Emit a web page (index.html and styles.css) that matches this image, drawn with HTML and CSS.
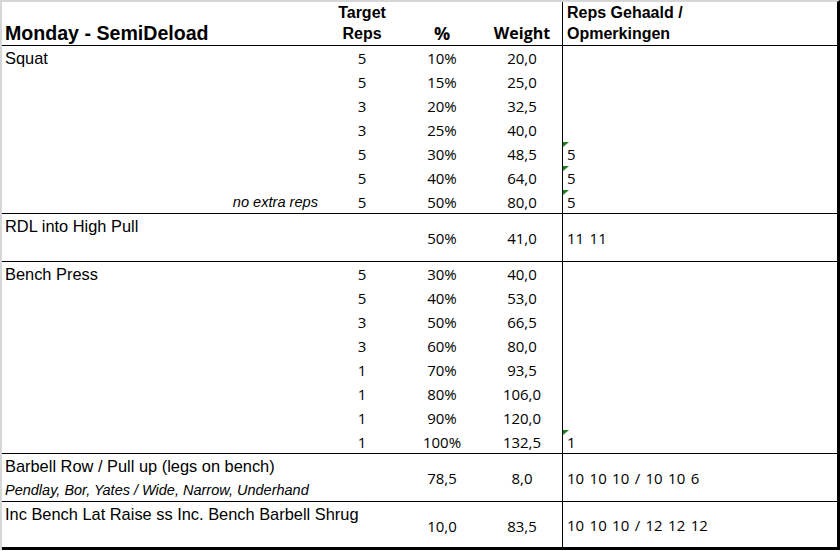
FILE: index.html
```html
<!DOCTYPE html>
<html>
<head>
<meta charset="utf-8">
<link rel="stylesheet" href="styles.css">
</head>
<body>
<div class="sheet">
  <div class="row head">
    <div class="main head-grid">
      <div class="title">Monday - SemiDeload</div>
      <div class="hd hd-b">Target<br>Reps</div>
      <div class="hd-n hd-c pct">%</div>
      <div class="hd-n hd-d">Weight</div>
    </div>
    <div class="notes head-notes">Reps Gehaald /<br>Opmerkingen</div>
  </div>

  <div class="row h7">
    <div class="main list">
      <div class="name">Squat</div><div class="num">5</div><div class="num">10%</div><div class="num">20,0</div>
      <div></div><div class="num">5</div><div class="num">15%</div><div class="num">25,0</div>
      <div></div><div class="num">3</div><div class="num">20%</div><div class="num">32,5</div>
      <div></div><div class="num">3</div><div class="num">25%</div><div class="num">40,0</div>
      <div></div><div class="num">5</div><div class="num">30%</div><div class="num">48,5</div>
      <div></div><div class="num">5</div><div class="num">40%</div><div class="num">64,0</div>
      <div class="note-l">no extra reps</div><div class="num">5</div><div class="num">50%</div><div class="num">80,0</div>
    </div>
    <div class="notes list">
      <div></div><div></div><div></div><div></div>
      <div class="ncell flag">5</div>
      <div class="ncell flag">5</div>
      <div class="ncell flag">5</div>
    </div>
  </div>

  <div class="row h2">
    <div class="main pair">
      <div class="name r1">RDL into High Pull</div>
      <div class="num span c3">50%</div>
      <div class="num span c4">41,0</div>
    </div>
    <div class="notes mid"><div class="ncell">11 11</div></div>
  </div>

  <div class="row h8">
    <div class="main list">
      <div class="name">Bench Press</div><div class="num">5</div><div class="num">30%</div><div class="num">40,0</div>
      <div></div><div class="num">5</div><div class="num">40%</div><div class="num">53,0</div>
      <div></div><div class="num">3</div><div class="num">50%</div><div class="num">66,5</div>
      <div></div><div class="num">3</div><div class="num">60%</div><div class="num">80,0</div>
      <div></div><div class="num">1</div><div class="num">70%</div><div class="num">93,5</div>
      <div></div><div class="num">1</div><div class="num">80%</div><div class="num">106,0</div>
      <div></div><div class="num">1</div><div class="num">90%</div><div class="num">120,0</div>
      <div></div><div class="num">1</div><div class="num">100%</div><div class="num">132,5</div>
    </div>
    <div class="notes list">
      <div></div><div></div><div></div><div></div><div></div><div></div><div></div>
      <div class="ncell flag">1</div>
    </div>
  </div>

  <div class="row h2">
    <div class="main pair">
      <div class="name r1">Barbell Row / Pull up (legs on bench)</div>
      <div class="sub r2">Pendlay, Bor, Yates / Wide, Narrow, Underhand</div>
      <div class="num span c3">78,5</div>
      <div class="num span c4">8,0</div>
    </div>
    <div class="notes mid"><div class="ncell">10 10 10 / 10 10 6</div></div>
  </div>

  <div class="row h2 last">
    <div class="main pair">
      <div class="name r1">Inc Bench Lat Raise ss Inc. Bench Barbell Shrug</div>
      <div class="num span c3">10,0</div>
      <div class="num span c4">83,5</div>
    </div>
    <div class="notes mid"><div class="ncell">10 10 10 / 12 12 12</div></div>
  </div>
</div>
</body>
</html>
```

FILE: styles.css
```css
html, body {
  margin: 0;
  background: #fff;
}

.sheet {
  width: 840px;
  box-sizing: border-box;
  border-top: 2px solid #d6d6d6;
  border-left: 2px solid #d6d6d6;
  border-right: 3px solid #000;
  font-family: "Liberation Sans", Arial, sans-serif;
  color: #000;
}

.row {
  display: flex;
  box-sizing: border-box;
  border-bottom: 1px solid #000;
}

.row.last {
  border-bottom: 3px solid #000;
}

.head { height: 44px; }
.h7 { height: 168px; }
.h8 { height: 192px; }
.h2 { height: 48px; }

.main {
  width: 560px;
  flex: none;
  display: grid;
  grid-template-columns: 320px 80px 80px 80px;
  grid-auto-rows: 24px;
}

.notes {
  flex: 1;
  border-left: 1px solid #000;
  display: grid;
  grid-auto-rows: 24px;
  align-content: start;
}

.notes.mid {
  display: flex;
  align-items: center;
}

/* header */
.head-grid {
  grid-template-rows: 21px 21px;
}

.title {
  grid-column: 1;
  grid-row: 2;
  padding-left: 3px;
  font-weight: bold;
  font-size: 19.6px;
  line-height: 20px;
  white-space: nowrap;
}

.hd {
  font-weight: bold;
  font-size: 16px;
  line-height: 21px;
  text-align: center;
}

.hd-b {
  grid-column: 2;
  grid-row: 1 / 3;
}

.hd-n {
  grid-row: 2;
  font-family: "Open Sans", sans-serif;
  font-weight: bold;
  font-size: 16px;
  line-height: 21px;
  text-align: center;
}

.pct {
  font-size: 18px;
}

.hd-c { grid-column: 3; }
.hd-d { grid-column: 4; }

.head-notes {
  display: block;
  padding-left: 4px;
  font-weight: bold;
  font-size: 16px;
  line-height: 21px;
  white-space: nowrap;
}

/* body cells */
.name {
  padding-left: 3px;
  font-size: 16.4px;
  line-height: 24px;
  white-space: nowrap;
}

.note-l {
  padding-right: 4px;
  text-align: right;
  font-style: italic;
  font-size: 14.6px;
  line-height: 24px;
  white-space: nowrap;
}

.sub {
  padding-left: 3px;
  font-style: italic;
  font-size: 14.5px;
  line-height: 24px;
  white-space: nowrap;
}

.num {
  font-family: "Open Sans", sans-serif;
  font-size: 15px;
  line-height: 24px;
  text-align: center;
  white-space: nowrap;
}

.pair {
  grid-template-rows: 24px 24px;
}

.r1 { grid-column: 1; grid-row: 1; }
.r2 { grid-column: 1; grid-row: 2; }
.c3 { grid-column: 3; }
.c4 { grid-column: 4; }

.span {
  grid-row: 1 / 3;
  align-self: center;
}

.ncell {
  position: relative;
  padding-left: 4px;
  font-family: "Open Sans", sans-serif;
  font-size: 15px;
  line-height: 24px;
  word-spacing: 1.5px;
  white-space: nowrap;
}

.flag::before {
  content: "";
  position: absolute;
  top: 0;
  left: 0;
  width: 0;
  height: 0;
  border-top: 5px solid #1f7f1f;
  border-right: 6px solid transparent;
}
```
